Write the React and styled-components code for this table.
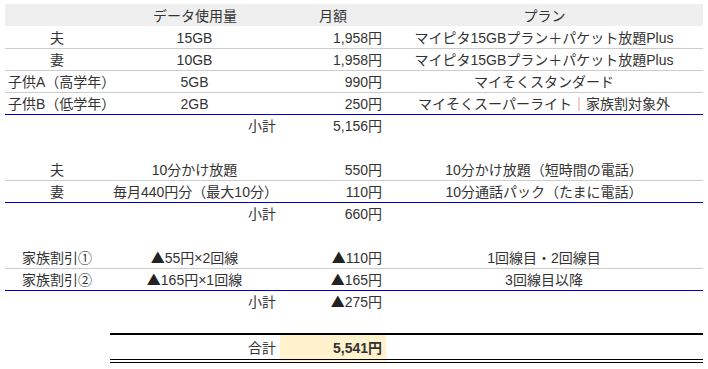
import styled, { createGlobalStyle } from 'styled-components';

const GlobalStyle = createGlobalStyle`
  html, body {
    margin: 0;
    background: #fff;
  }
  body {
    padding: 4px 5px;
    font-family: "Liberation Sans", "Noto Sans CJK JP", sans-serif;
    color: #333;
  }
`;

const Sheet = styled.table`
  width: 698px;
  table-layout: fixed;
  border-collapse: collapse;
  font-size: 14px;
  line-height: 14px;
`;

const HeadCell = styled.th`
  height: 22px;
  box-sizing: border-box;
  padding: 0 3px 3px;
  background: #efefef;
  font-weight: normal;
  text-align: center;
  vertical-align: bottom;
`;

const lineColors = {
  none: 'transparent',
  gray: '#cccccc',
  blue: '#0000cc',
};

const Cell = styled.td`
  height: 22px;
  box-sizing: border-box;
  padding: 0 4px 3px 3px;
  text-align: ${(p) => p.$align || 'center'};
  vertical-align: bottom;
  white-space: nowrap;
  border-bottom: 1px solid ${(p) => lineColors[p.$line || 'none']};
`;

const TotalCell = styled.td`
  height: 27px;
  box-sizing: border-box;
  padding: 0 4px 4px 3px;
  text-align: ${(p) => p.$align || 'center'};
  vertical-align: bottom;
  border-top: 2px solid #000;
  border-bottom: 4px double #000;
  background: ${(p) => (p.$highlight ? '#fff2cc' : 'transparent')};
  font-weight: ${(p) => (p.$highlight ? 'bold' : 'normal')};
`;

const Divider = styled.span`
  color: #e06666;
`;

const Minus = styled.span`
  font-family: "Noto Sans CJK JP", sans-serif;
  color: #222;
`;

// 「▲」だけCJKフォントで大きめに出す
const withMinus = (text) => {
  if (typeof text !== 'string' || !text.includes('▲')) return text;
  return text.split('▲').map((part, i) => (
    <span key={i}>
      {i > 0 && <Minus>▲</Minus>}
      {part}
    </span>
  ));
};

const sections = [
  {
    rows: [
      ['夫', '15GB', '1,958円', 'マイピタ15GBプラン＋パケット放題Plus'],
      ['妻', '10GB', '1,958円', 'マイピタ15GBプラン＋パケット放題Plus'],
      ['子供A（高学年）', '5GB', '990円', 'マイそくスタンダード'],
      [
        '子供B（低学年）',
        '2GB',
        '250円',
        <>
          マイそくスーパーライト<Divider>｜</Divider>家族割対象外
        </>,
      ],
    ],
    subtotal: '5,156円',
  },
  {
    rows: [
      ['夫', '10分かけ放題', '550円', '10分かけ放題（短時間の電話）'],
      ['妻', '毎月440円分（最大10分）', '110円', '10分通話パック（たまに電話）'],
    ],
    subtotal: '660円',
  },
  {
    rows: [
      ['家族割引①', '▲55円×2回線', '▲110円', '1回線目・2回線目'],
      ['家族割引②', '▲165円×1回線', '▲165円', '3回線目以降'],
    ],
    subtotal: '▲275円',
  },
];

const Section = ({ rows, subtotal }) => (
  <>
    {rows.map((r, i) => {
      const line = i === rows.length - 1 ? 'blue' : 'gray';
      return (
        <tr key={i}>
          <Cell $line={line}>{r[0]}</Cell>
          <Cell $line={line}>{withMinus(r[1])}</Cell>
          <Cell $line={line} $align="right">{withMinus(r[2])}</Cell>
          <Cell $line={line}>{r[3]}</Cell>
        </tr>
      );
    })}
    <tr>
      <Cell />
      <Cell $align="right">小計</Cell>
      <Cell $align="right">{withMinus(subtotal)}</Cell>
      <Cell />
    </tr>
  </>
);

const App = () => (
  <>
    <GlobalStyle />
    <Sheet>
      <colgroup>
        <col style={{ width: 105 }} />
        <col style={{ width: 170 }} />
        <col style={{ width: 106 }} />
        <col style={{ width: 317 }} />
      </colgroup>
      <thead>
        <tr>
          <HeadCell />
          <HeadCell>データ使用量</HeadCell>
          <HeadCell>月額</HeadCell>
          <HeadCell>プラン</HeadCell>
        </tr>
      </thead>
      <tbody>
        {sections.map((s, i) => (
          <>
            {i > 0 && (
              <tr>
                <Cell colSpan={4} />
              </tr>
            )}
            <Section key={i} rows={s.rows} subtotal={s.subtotal} />
          </>
        ))}
        <tr>
          <Cell colSpan={4} />
        </tr>
        <tr>
          <Cell />
          <TotalCell $align="right">合計</TotalCell>
          <TotalCell $align="right" $highlight>5,541円</TotalCell>
          <TotalCell />
        </tr>
      </tbody>
    </Sheet>
  </>
);

export default App;
